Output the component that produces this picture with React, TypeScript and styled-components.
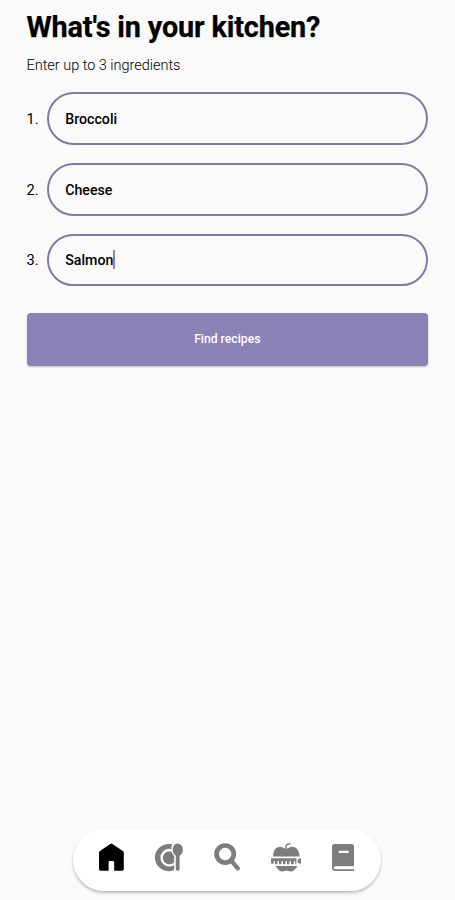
import React, { useState } from "react";
import styled, { createGlobalStyle } from "styled-components";

const GlobalStyle = createGlobalStyle`
  * { box-sizing: border-box; }
  body { margin: 0; background: #fafafa; color: #000; font-family: Roboto, "Noto Sans", sans-serif; }
`;

const Screen = styled.div`
  height: 900px;
  display: flex;
  flex-direction: column;
  justify-content: space-between;
  padding: 9px 26.9px 9.5px 26.5px;
  overflow: hidden;
`;

const Title = styled.h1`
  margin: 0;
  font-size: 28.8px;
  line-height: 36px;
  font-weight: 700;
  letter-spacing: -0.14px;
  white-space: nowrap;
  -webkit-text-stroke: 0.25px #000;
`;

const Subtitle = styled.p`
  margin: 10px 0 0;
  font-size: 14.5px;
  line-height: 22px;
  font-weight: 300;
  letter-spacing: -0.02px;
  color: #000;
`;

const IngredientList = styled.div`
  display: grid;
  row-gap: 18px;
  margin-top: 15px;
`;

const IngredientRow = styled.label`
  display: grid;
  grid-template-columns: 20.7px 1fr;
  align-items: center;
  height: 52.8px;
  font-size: 14.6px;
`;

const Number = styled.span`
  padding-top: 1px;
`;

const Field = styled.span`
  position: relative;
  display: flex;
  align-items: center;
  height: 100%;
`;

const Input = styled.input`
  width: 100%;
  height: 100%;
  padding: 1px 16px 0;
  border: 2px solid #8279a8;
  border-radius: 27px;
  outline: none;
  background: transparent;
  color: #000;
  font: 500 14.2px Roboto, "Noto Sans", sans-serif;
`;

const Caret = styled.i`
  position: absolute;
  left: 65.8px;
  width: 2px;
  height: 19px;
  background: #8b82b8;
`;

const FindButton = styled.button`
  width: 100%;
  height: 53px;
  margin-top: 26.6px;
  padding: 0;
  border: 0;
  border-radius: 4px;
  background: #8b82b8;
  color: #fff;
  font: 500 12.2px Roboto, "Noto Sans", sans-serif;
  box-shadow: 0 1px 2px rgba(0, 0, 0, 0.25);
`;

const NavBar = styled.nav`
  align-self: center;
  display: flex;
  align-items: flex-start;
  justify-content: center;
  gap: 26px;
  width: 308px;
  height: 61.5px;
  padding-top: 12px;
  border-radius: 31px;
  background: #fff;
  box-shadow: 0 2px 3px rgba(0, 0, 0, 0.25);
`;

const NavItem = styled.button<{ $active?: boolean }>`
  display: flex;
  width: 32px;
  height: 32px;
  padding: 0;
  border: 0;
  background: none;
  color: ${({ $active }) => ($active ? "#000" : "#7d7d7d")};
`;

const Glyph = styled.svg`
  width: 32px;
  height: 32px;
  fill: currentColor;
`;

const HomeIcon = () => (
  <Glyph viewBox="0 0 32 32">
    <path d="M15.2 2.9Q16.3 2.1 17.4 2.9L27.8 10.1Q28.8 10.8 28.8 12.1V28Q28.8 29.7 27.1 29.7H19.2V21.3Q19.2 20 17.9 20H14.9Q13.6 20 13.6 21.3V29.7H5.7Q4 29.7 4 28V12.1Q4 10.8 5 10.1Z" />
  </Glyph>
);

const PlateIcon = () => (
  <Glyph viewBox="-0.5 0 32 32">
    <path d="M18.9 3.4A13.7 13.7 0 1 0 20.7 29.1V23.9A8.8 8.8 0 1 1 18.3 8.2Q17 5.9 18.9 3.4Z" />
    <path d="M18.1 10.8A6.5 6.5 0 1 0 20.7 21.2V14.9Q18.6 13.2 18.1 10.8Z" />
    <path d="M24.2 2.5C21.3 2.5 19.2 5.3 19.2 8.8C19.2 11.7 20.5 13.6 22.3 14.6V27.9Q22.3 29.8 24.2 29.8T26.1 27.9V14.6C27.9 13.6 29.4 11.7 29.4 8.8C29.4 5.3 27.1 2.5 24.2 2.5Z" />
  </Glyph>
);

const SearchIcon = () => (
  <Glyph viewBox="0 0 32 32">
    <circle cx="14.2" cy="13.1" r="8.6" fill="none" stroke="currentColor" strokeWidth="4.7" />
    <path d="M20 19.3L26.8 27.4" fill="none" stroke="currentColor" strokeWidth="4.3" strokeLinecap="round" />
  </Glyph>
);

const DietIcon = () => (
  <Glyph viewBox="0 0 32 32">
    <path d="M16.6 7.5C16.6 4.7 17.6 3 20.7 2.8" fill="none" stroke="currentColor" strokeWidth="1.5" strokeLinecap="round" />
    <path d="M4.2 15.5C4 9 7.4 5.2 12.3 5.9C14 6.1 15 7.6 17 7.6C19 7.6 20 6.1 21.8 5.9C27 5.2 30.3 9 30.6 15.5Z" />
    <path d="M3 17.2H27.4V23.2H26.2V20.2H24.8V23.2H22V20.2H20.4V23.2H18V20.2H16.4V23.2H14V20.2H12.4V23.2H10V20.2H8.4V23.2H6V20.2H4.6V22.7H3Q2 22.7 2 21.5V18.4Q2 17.2 3 17.2Z" />
    <path d="M32 17.3V22.7C29.7 22.7 28.5 21.9 28.5 20S29.9 17.3 32 17.3Z" />
    <path d="M6.5 24.9H28.5C26.5 28.3 23.8 30.7 21.3 30.5C19.7 30.4 19 29.5 17.4 29.5S15.2 30.4 13.6 30.5C11.1 30.7 8.5 28.3 6.5 24.9Z" />
  </Glyph>
);

const BookIcon = () => (
  <Glyph viewBox="0 0 32 32">
    <path fillRule="evenodd" d="M7.5 3H24.7Q27 3 27 5.3V25.3H8.5C6.3 25.3 6.3 28.3 8.5 28.3H27V29.9H8.5Q5 29.9 5 26.4V5.5Q5 3 7.5 3ZM12.3 9.8Q11.7 9.8 11.7 10.4V11.4Q11.7 12 12.3 12H21Q21.6 12 21.6 11.4V10.4Q21.6 9.8 21 9.8Z" />
  </Glyph>
);

const navigation = [
  { label: "Home", Icon: HomeIcon },
  { label: "Meals", Icon: PlateIcon },
  { label: "Search", Icon: SearchIcon },
  { label: "Diet", Icon: DietIcon },
  { label: "Recipe book", Icon: BookIcon },
];

export default function App() {
  const [ingredients, setIngredients] = useState(["Broccoli", "Cheese", "Salmon"]);
  const update = (index: number, value: string) =>
    setIngredients((items) => items.map((item, i) => (i === index ? value : item)));

  return (
    <>
      <GlobalStyle />
      <Screen>
        <main>
          <Title>What's in your kitchen?</Title>
          <Subtitle>Enter up to 3 ingredients</Subtitle>
          <IngredientList>
            {ingredients.map((value, index) => (
              <IngredientRow key={index}>
                <Number>{index + 1}.</Number>
                <Field>
                  <Input value={value} onChange={(event) => update(index, event.target.value)} />
                  {index === 2 && <Caret />}
                </Field>
              </IngredientRow>
            ))}
          </IngredientList>
          <FindButton>Find recipes</FindButton>
        </main>
        <NavBar>
          {navigation.map(({ label, Icon }, index) => (
            <NavItem key={label} aria-label={label} $active={index === 0}>
              <Icon />
            </NavItem>
          ))}
        </NavBar>
      </Screen>
    </>
  );
}
